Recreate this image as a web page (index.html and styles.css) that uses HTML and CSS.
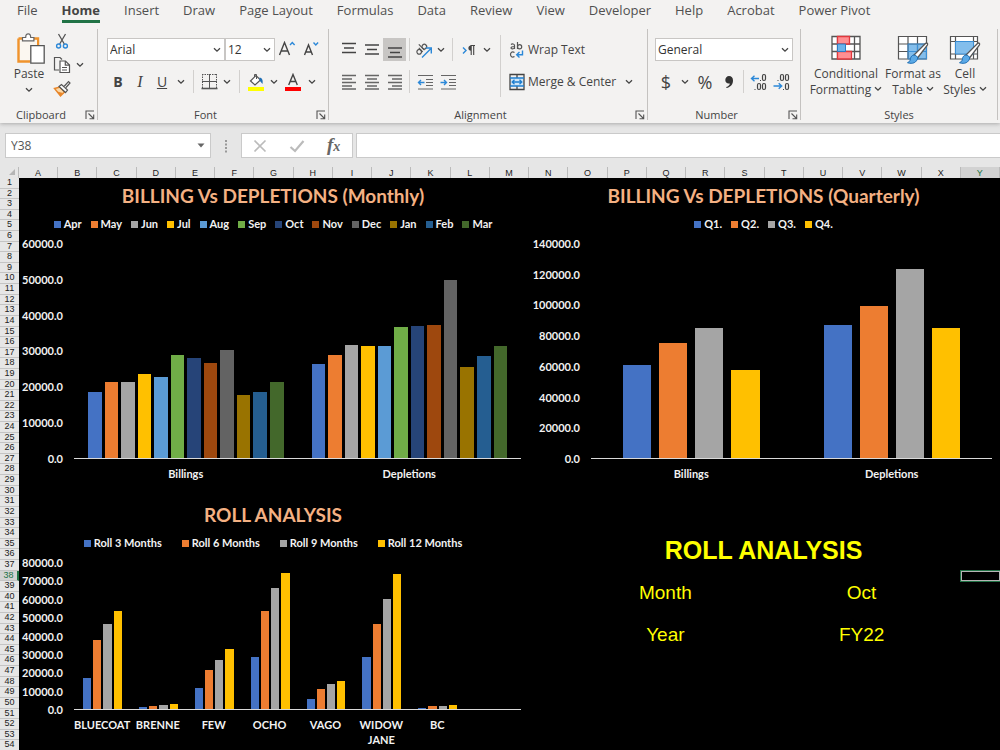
FILE: index.html
```html
<!DOCTYPE html>
<html lang="en">
<head>
<meta charset="utf-8">
<title>Billing Vs Depletions</title>
<link rel="stylesheet" href="styles.css">
</head>
<body>
<svg class="defs" aria-hidden="true">
  <symbol id="chev" viewBox="0 0 8 6"><path d="M1 1.2 4 4.2 7 1.2" fill="none" stroke="#444" stroke-width="1.3"/></symbol>
  <symbol id="launch" viewBox="0 0 10 10"><path d="M1 9V1h8M3.5 3.5l5 5M8.7 4.5v4.2H4.5" fill="none" stroke="#555" stroke-width="1.1"/></symbol>
</svg>

<header class="ribbon">
  <nav class="tabs">
    <a href="#">File</a><a href="#" class="active">Home</a><a href="#">Insert</a><a href="#">Draw</a><a href="#">Page Layout</a><a href="#">Formulas</a><a href="#">Data</a><a href="#">Review</a><a href="#">View</a><a href="#">Developer</a><a href="#">Help</a><a href="#">Acrobat</a><a href="#">Power Pivot</a>
  </nav>

  <div class="groups">
    <section class="group">
      <div class="tools clipboard">
        <button class="big">
          <svg width="32" height="33" viewBox="0 0 32 33" fill="none">
            <path d="M5.500 5.500H25V14M17 28.500H5.500V5.500" stroke="#f0932b" stroke-width="2.400"/>
            <path d="M7 7h17v7h-7v13H7z" fill="#fbf7f0"/>
            <path d="M9.500 7.800V4.500h3.200C12.700 2 13.700.8 15.200.8S17.700 2 17.700 4.500h3.200v3.300z" fill="#fff" stroke="#666" stroke-width="1.200"/>
            <path d="M17.800 12.600h13.400v17.600H17.800z" fill="#fff" stroke="#555" stroke-width="1.300"/>
          </svg>
          <span>Paste</span>
          <svg class="chev line"><use href="#chev"/></svg>
        </button>
        <div class="stack">
          <button class="icon" aria-label="Cut"><svg width="16" height="16" viewBox="0 0 16 16" fill="none"><path d="M4.500 1 10.300 11M11.500 1 5.700 11" stroke="#555" stroke-width="1.300"/><circle cx="4.600" cy="13" r="2" stroke="#2b88d8" stroke-width="1.400"/><circle cx="11.400" cy="13" r="2" stroke="#2b88d8" stroke-width="1.400"/></svg></button>
          <div class="row-mini">
            <button class="icon" aria-label="Copy"><svg width="18" height="18" viewBox="0 0 18 18" fill="none" stroke="#555" stroke-width="1.200"><path d="M6 14H1.500V1.500H7L9 3.500"/><path d="M7 5h5.500L16.500 9v7.500H7z" fill="#fff"/><path d="M12.300 5v4.200h4.200M9 11.500h5M9 14h5"/></svg></button>
            <button class="drop" aria-label="Copy options"><svg class="chev"><use href="#chev"/></svg></button>
          </div>
          <button class="icon" aria-label="Format Painter"><svg width="18" height="18" viewBox="0 0 18 18" fill="none"><path d="M1.500 8.500 7 7l4.500 5-4 4z" fill="#fbd9a8" stroke="#e8862a" stroke-width="1.500"/><path d="M4 11.500l6 1.500-2.500 3z" fill="#e8862a"/><path d="M6 6.500 8.500 4.500l6 5.500-2 2.500z" fill="#fff" stroke="#555" stroke-width="1.200"/><path d="M11 6.500 15.500 1.500l1.500 1.500-4.500 5" fill="#fff" stroke="#555" stroke-width="1.200"/></svg></button>
        </div>
      </div>
      <div class="caption"><span>Clipboard</span><button class="launch" aria-label="Clipboard settings"><svg width="10" height="10"><use href="#launch"/></svg></button></div>
    </section>

    <section class="group">
      <div class="tools rows font">
        <div class="row">
          <div class="combo face"><select aria-label="Font"><option>Arial</option></select><svg class="chev"><use href="#chev"/></svg></div>
          <div class="combo size"><select aria-label="Font size"><option>12</option></select><svg class="chev"><use href="#chev"/></svg></div>
          <button class="w24" aria-label="Increase font size"><svg width="18" height="18" viewBox="0 0 18 18" fill="none"><path d="M1.500 14 6.500 1.500 11.500 14M3.200 10h6.600" stroke="#444" stroke-width="1.400"/><path d="M12 4l2.300-2.500L16.600 4" stroke="#2b88d8" stroke-width="1.400"/></svg></button>
          <button class="w24" aria-label="Decrease font size"><svg width="18" height="18" viewBox="0 0 18 18" fill="none"><path d="M2.500 14 6.500 4 10.500 14M3.900 11h5.200" stroke="#444" stroke-width="1.400"/><path d="M11.500 1.500l2.300 2.500 2.300-2.500" stroke="#2b88d8" stroke-width="1.400"/></svg></button>
        </div>
        <div class="row">
          <button class="w22 glyph"><b>B</b></button>
          <button class="w22 glyph serif"><i>I</i></button>
          <button class="w22 glyph"><u>U</u></button>
          <button class="w16" aria-label="Underline options"><svg class="chev"><use href="#chev"/></svg></button>
          <span class="sep"></span>
          <button class="w20" aria-label="Borders"><svg width="17" height="17" viewBox="0 0 17 17" fill="none" stroke="#555"><path d="M1.500 1v14M15.500 1v14M1 1.500h15" stroke-dasharray="1.500 1"/><path d="M8.500 1v14M1 8.500h15"/><path d="M.5 15.500h16" stroke-width="1.600"/></svg></button>
          <button class="w16" aria-label="Border options"><svg class="chev"><use href="#chev"/></svg></button>
          <span class="sep"></span>
          <button class="w22" aria-label="Fill colour"><svg width="18" height="18" viewBox="0 0 18 18" fill="none"><path d="M3.500 8 9 2.500l4.500 4.500L8 12z" fill="#fff" stroke="#555" stroke-width="1.200"/><path d="M7.500 4V1.500h2V6" stroke="#555"/><path d="M12.500 4.500c3 .5 3.500 3 3 6.500l-3-3.500z" fill="#1f6fb5"/><path d="M1 14h16v4H1z" fill="#ff0"/></svg></button>
          <button class="w14" aria-label="Fill colours"><svg class="chev"><use href="#chev"/></svg></button>
          <button class="w24" aria-label="Font colour"><svg width="18" height="18" viewBox="0 0 18 18" fill="none"><path d="M4.700 12 9 1.500 13.300 12M6.200 8.500h5.600" stroke="#444" stroke-width="1.400"/><path d="M1 14h16v4H1z" fill="#f00"/></svg></button>
          <button class="w14" aria-label="Font colours"><svg class="chev"><use href="#chev"/></svg></button>
        </div>
      </div>
      <div class="caption"><span>Font</span><button class="launch" aria-label="Font settings"><svg width="10" height="10"><use href="#launch"/></svg></button></div>
    </section>

    <section class="group">
      <div class="tools align">
        <div class="rows">
          <div class="row">
            <button class="w23" aria-label="Top align"><svg width="16" height="16" viewBox="0 0 16 16"><path d="M1 1.500h14M3 6h10M1 10.500h14" stroke="#444" stroke-width="1.300"/></svg></button>
            <button class="w23" aria-label="Middle align"><svg width="16" height="16" viewBox="0 0 16 16"><path d="M1 3h14M3 7.500h10M1 12h14" stroke="#444" stroke-width="1.300"/></svg></button>
            <button class="w23 on" aria-label="Bottom align"><svg width="16" height="16" viewBox="0 0 16 16"><path d="M1 6h14M3 10.500h10M1 15h14" stroke="#444" stroke-width="1.300"/></svg></button>
            <span class="sep near"></span>
            <button class="w20" aria-label="Orientation"><svg width="20" height="18" viewBox="0 0 20 18" fill="none"><g transform="rotate(-45 8 8)" stroke="#555" stroke-width="1.200"><circle cx="4" cy="8" r="2.300"/><path d="M6.500 5v5.500"/><path d="M9 2.500v8"/><circle cx="11.300" cy="8" r="2.300"/></g><path d="M8 16.500 16.500 8M11.800 7h5.500v5.500" stroke="#2b88d8" stroke-width="1.400"/></svg></button>
            <button class="w14" aria-label="Orientation options"><svg class="chev"><use href="#chev"/></svg></button>
            <span class="sep"></span>
            <button class="w22" aria-label="Text direction"><svg width="14" height="14" viewBox="0 0 14 14" fill="none"><path d="M1 4.500l3 3-3 3" stroke="#2b88d8" stroke-width="1.400"/><path d="M9 2.500a2.500 2.500 0 0 0 0 5.200z" fill="#444"/><path d="M9.200 2.500V12M11.700 2.500V12M8.500 2.500H13" stroke="#444" stroke-width="1.100"/></svg></button>
            <button class="w14" aria-label="Direction options"><svg class="chev"><use href="#chev"/></svg></button>
          </div>
          <div class="row">
            <button class="w23" aria-label="Align left"><svg width="16" height="16" viewBox="0 0 16 16"><path d="M1 1.500h14M1 5h10M1 8.500h14M1 12h10M1 15h14" stroke="#666" stroke-width="1.300"/></svg></button>
            <button class="w23" aria-label="Centre"><svg width="16" height="16" viewBox="0 0 16 16"><path d="M1 1.500h14M3 5h10M1 8.500h14M3 12h10M1 15h14" stroke="#666" stroke-width="1.300"/></svg></button>
            <button class="w23" aria-label="Align right"><svg width="16" height="16" viewBox="0 0 16 16"><path d="M1 1.500h14M5 5h10M1 8.500h14M5 12h10M1 15h14" stroke="#666" stroke-width="1.300"/></svg></button>
            <span class="sep near"></span>
            <button class="w22" aria-label="Decrease indent"><svg width="16" height="16" viewBox="0 0 16 16" fill="none"><path d="M1 1.500h15M9 5.500h7M9 8.500h7M9 11.500h7M1 15h15" stroke="#666" stroke-width="1.200"/><path d="M7.500 8.500H1.500M4 6 1.500 8.500 4 11" stroke="#2b88d8" stroke-width="1.400"/></svg></button>
            <button class="w23" aria-label="Increase indent"><svg width="16" height="16" viewBox="0 0 16 16" fill="none"><path d="M1 1.500h15M9 5.500h7M9 8.500h7M9 11.500h7M1 15h15" stroke="#666" stroke-width="1.200"/><path d="M.5 8.500h6M4 6l2.500 2.500L4 11" stroke="#2b88d8" stroke-width="1.400"/></svg></button>
          </div>
        </div>
        <span class="tall"></span>
        <div class="rows wide">
          <div class="row"><button class="labelled"><svg width="18" height="18" viewBox="0 0 18 18" fill="none" stroke="#555" stroke-width="1.200"><path d="M3 3.500c1-.8 3.500-.8 3.500 1V8M6.500 5.500C4 5.500 3 6 3 7s2.500 1.300 3.500 0M9.500 1v7"/><circle cx="11.600" cy="5.800" r="2.100"/><path d="M6.500 11.500c-2.500-1.500-4 .2-4 2s1.500 3.500 4 2"/><path d="M14.500 9.500v4.200H9M11.500 11l-2.800 2.700 2.800 2.700" stroke="#2b88d8" stroke-width="1.400"/></svg>Wrap Text</button></div>
          <div class="row"><button class="labelled"><svg width="18" height="18" viewBox="0 0 18 18" fill="none"><path d="M2 5h14v8H2z" fill="#cfe6f8"/><path d="M2 1.500h14v15H2zM9 1.500V5M9 13v3.500" stroke="#444" stroke-width="1.300"/><path d="M2 5h14M2 13h14M4 9h10M6.500 6.800 4.200 9l2.300 2.200M11.500 6.800 13.800 9l-2.300 2.200" stroke="#1f7fd0" stroke-width="1.300"/></svg>Merge &amp; Center</button><button class="w14 more" aria-label="Merge options"><svg class="chev"><use href="#chev"/></svg></button></div>
        </div>
      </div>
      <div class="caption"><span>Alignment</span><button class="launch" aria-label="Alignment settings"><svg width="10" height="10"><use href="#launch"/></svg></button></div>
    </section>

    <section class="group">
      <div class="tools rows number">
        <div class="row"><div class="combo format"><select aria-label="Number format"><option>General</option></select><svg class="chev"><use href="#chev"/></svg></div></div>
        <div class="row">
          <button class="w22 glyph large">$</button>
          <button class="w16" aria-label="Currency options"><svg class="chev"><use href="#chev"/></svg></button>
          <button class="w24 glyph large">%</button>
          <button class="w23" aria-label="Comma style"><svg width="10" height="14" viewBox="0 0 10 14"><path d="M5 1c2.500 0 4 1.700 4 4.500 0 4-2.500 6.800-6.500 7.500l-.3-1c2.300-.8 3.500-2 3.600-3.600C3.300 9 1.300 7.500 1.300 5 1.300 2.700 3 1 5 1z" fill="#333"/></svg></button>
          <span class="sep tight"></span>
          <button class="w23" aria-label="Increase decimal"><svg width="17" height="18" viewBox="0 0 17 18" fill="none" stroke="#444" stroke-width="1.200"><path d="M9 5.500H1.500M4.500 2.700 1.500 5.500l3 2.800" stroke="#2b88d8" stroke-width="1.400"/><rect x="12.500" y="1.500" width="3" height="6" rx="1.500"/><rect x="7.500" y="10.500" width="3" height="6" rx="1.500"/><rect x="12.500" y="10.500" width="3" height="6" rx="1.500"/><path d="M10 7.500h1M4.500 16.500h1"/></svg></button>
          <button class="w23" aria-label="Decrease decimal"><svg width="17" height="18" viewBox="0 0 17 18" fill="none" stroke="#444" stroke-width="1.200"><rect x="7.500" y="1.500" width="3" height="6" rx="1.500"/><rect x="12.500" y="1.500" width="3" height="6" rx="1.500"/><path d="M4.500 7.500h1M10 16.500h1"/><path d="M.5 13h8M5.700 10.200l3 2.800-3 2.800" stroke="#2b88d8" stroke-width="1.400"/><rect x="12.500" y="10.500" width="3" height="6" rx="1.500"/></svg></button>
        </div>
      </div>
      <div class="caption"><span>Number</span><button class="launch" aria-label="Number settings"><svg width="10" height="10"><use href="#launch"/></svg></button></div>
    </section>

    <section class="group">
      <div class="tools styles">
        <button class="big w72">
          <svg width="32" height="33" viewBox="0 0 32 33" fill="none"><path d="M2 3.500h28v22.500H2z" fill="#fff"/><path d="M2 3.500h28v22.500H2zM2 11h28M2 18.500h28M7.500 3.500v22.500M24.500 3.500v22.500" stroke="#555" stroke-width="1.300"/><path d="M7.500 3.500h12V11h-12zM7.500 18.500h14v7.500h-14z" fill="#ff8f92" stroke="#e0393e" stroke-width="1.300"/><path d="M7.500 11h8v7.500h-8z" fill="#6db3ea" stroke="#2b7cc4"/></svg>
          <span>Conditional</span><span>Formatting <svg class="chev"><use href="#chev"/></svg></span>
        </button>
        <button class="big w54">
          <svg width="32" height="33" viewBox="0 0 32 33" fill="none"><path d="M1.500 3.500h28v22.500h-28z" fill="#fff"/><path d="M11 11h18.500v15H11z" fill="#83beec"/><path d="M1.500 3.500h28v22.500h-28zM1.500 11h28M1.500 18.500h28M11 3.500v22.500M20.500 3.500v22.500" stroke="#555" stroke-width="1.200"/><path d="M11 11h18.500v15H11zM11 18.500h18.500M20.500 11v15" stroke="#3a8fd6"/><path d="M17 22 28.500 10.500c1.300-1.200 2.800.2 1.800 1.700L20.500 25z" fill="#fff" stroke="#555" stroke-width="1.300"/><path d="M17 22c2 .3 3.300 1.300 3.700 3-1 4.500-5 6.500-10.200 4.700 2.500-1 2.700-2.300 3-4.200.3-2 1.700-3.300 3.500-3.500z" fill="#5aa9e6" stroke="#1f6fb5"/></svg>
          <span>Format as</span><span>Table <svg class="chev"><use href="#chev"/></svg></span>
        </button>
        <button class="big w42">
          <svg width="32" height="33" viewBox="0 0 32 33" fill="none"><path d="M1.500 3.500h27v22.500h-27z" fill="#fff"/><path d="M1.500 3.500h27v22.500h-27zM1.500 8.500h27M1.500 21h27M6.500 3.500v22.500M24.500 3.500v22.500" stroke="#555" stroke-width="1.200"/><path d="M6.500 8.500h18V21h-18z" fill="#83beec" stroke="#3a8fd6"/><path d="M17 22 28.500 10.500c1.300-1.200 2.800.2 1.800 1.700L20.500 25z" fill="#fff" stroke="#555" stroke-width="1.300"/><path d="M17 22c2 .3 3.300 1.300 3.700 3-1 4.500-5 6.500-10.200 4.700 2.500-1 2.700-2.300 3-4.200.3-2 1.700-3.300 3.500-3.500z" fill="#5aa9e6" stroke="#1f6fb5"/></svg>
          <span>Cell</span><span>Styles <svg class="chev"><use href="#chev"/></svg></span>
        </button>
      </div>
      <div class="caption"><span>Styles</span></div>
    </section>
  </div>
</header>

<div class="formula-bar">
  <div class="name-box"><input type="text" value="Y38" aria-label="Name box"><button aria-label="Show names"><svg width="8" height="5" viewBox="0 0 8 5"><path d="M.5.500h7L4 4.500z" fill="#666"/></svg></button></div>
  <span class="dots"><svg width="4" height="14" viewBox="0 0 4 14" fill="#999"><path d="M1 1h2v2H1zM1 4.500h2v2H1zM1 8h2v2H1zM1 11.500h2v2H1z"/></svg></span>
  <div class="entry">
    <button aria-label="Cancel"><svg width="14" height="14" viewBox="0 0 14 14"><path d="M1.500 1.500l11 11M12.500 1.500l-11 11" stroke="#bbb" stroke-width="1.700"/></svg></button>
    <button aria-label="Enter"><svg width="16" height="14" viewBox="0 0 16 14"><path d="M1.500 8l4.500 4L14.500 2" fill="none" stroke="#bbb" stroke-width="2.200"/></svg></button>
    <button class="fx"><i>f<small>x</small></i></button>
  </div>
  <input class="formula" type="text" aria-label="Formula">
</div>

<main class="workbook">
  <div class="corner"><svg width="6" height="6" viewBox="0 0 6 6"><path d="M6 0v6H0z" fill="#b5b5b5"/></svg></div>
  <div class="col-heads" id="cols"></div>
  <div class="row-heads" id="rows"></div>
  <div class="sheet">
    <section class="chart" id="monthly"></section>
    <section class="chart" id="quarterly"></section>
    <section class="chart" id="roll"></section>
    <section class="summary">
      <h2>ROLL ANALYSIS</h2>
      <table>
        <tr><th scope="row">Month</th><td>Oct</td></tr>
        <tr><th scope="row">Year</th><td>FY22</td></tr>
      </table>
    </section>
    <div class="selection"><div class="cell"></div></div>
  </div>
</main>
<script src="charts.js"></script>
</body>
</html>
```
FILE: styles.css
```css
* { box-sizing: border-box; }
body {
  margin: 0;
  min-height: 100vh;
  overflow: hidden;
  background: #e6e6e6;
  color: #444;
  font: 12px/16px "Open Sans", "Noto Sans", sans-serif;
}
button {
  display: flex;
  align-items: center;
  justify-content: center;
  margin: 0;
  padding: 0;
  border: 0;
  background: none;
  color: inherit;
  font: inherit;
}
svg { flex: none; }
.defs { position: absolute; width: 0; height: 0; }
.chev { width: 8px; height: 6px; }

/* ribbon */
.ribbon {
  position: relative;
  padding-bottom: 3px;
  background: #f3f2f1;
  box-shadow: 0 1px 4px #aaa;
}
.tabs { display: flex; gap: 24px; padding-left: 17px; }
.tabs a {
  border-bottom: 3px solid transparent;
  color: #505050;
  font-size: 13px;
  line-height: 20px;
  text-decoration: none;
  white-space: nowrap;
}
.tabs .active { border-color: #217346; color: #444; font-weight: 700; }
.groups {
  display: grid;
  grid-template-columns: 98fr 231fr 319fr 153fr 197fr 2fr;
  margin-top: 6px;
}
.group {
  display: flex;
  flex-direction: column;
  justify-content: space-between;
  min-width: 0;
  height: 91px;
  border-right: 1px solid #c4c2c0;
}
.tools { display: flex; white-space: nowrap; }
.rows { display: flex; flex-direction: column; gap: 9px; padding-top: 9px; }
.row { display: flex; align-items: center; height: 23px; }
.row button { height: 23px; flex: none; }
.w14 { width: 14px; }
.w16 { width: 16px; }
.w20 { width: 20px; }
.w22 { width: 22px; }
.w23 { width: 23px; }
.w24 { width: 24px; }
.on { background: #c8c6c4; }
.sep { width: 1px; height: 23px; margin: 0 5px 0 4px; background: #d2d0ce; }
.near { margin: 0 4px 0 3px; }
.tight { margin: 0 3px; }
.glyph { font-size: 14px; }
.glyph.large { font-size: 18px; }
.serif { font-family: "Liberation Serif", serif; font-size: 16px; }
.caption { display: flex; font-size: 11px; line-height: 10px; }
.caption span { flex: 1; text-align: center; }
.launch { width: 15px; }

.clipboard { padding-left: 13px; }
.stack { display: flex; flex-direction: column; padding-left: 7px; }
.stack .icon { width: 20px; height: 24px; }
.row-mini { display: flex; align-items: center; }
.drop { width: 16px; }
.big { flex-direction: column; justify-content: flex-start; padding-top: 4px; }
.big span .chev { vertical-align: 2px; }
.line { margin: 5px 0; }
.font { padding-left: 9px; }
.w72 { width: 72px; }
.w54 { width: 54px; }
.w42 { width: 42px; }
.align .rows { padding-left: 8px; }
.tall { width: 1px; height: 62px; margin: 6px 0 0 6px; background: #d2d0ce; }
.align .wide { padding-left: 7px; }
.align .wide .row { justify-content: flex-start; }
.labelled { gap: 2px; }
.more { margin-left: 6px; }
.number { padding: 9px 7px 0; }
.styles { gap: 4px; padding-left: 9px; }

.combo {
  display: flex;
  align-items: center;
  height: 23px;
  padding-right: 3px;
  border: 1px solid #c8c6c4;
  background: #fff;
}
.combo select {
  flex: 1;
  min-width: 0;
  padding: 0 0 0 2px;
  border: 0;
  appearance: none;
  background: none;
  color: #333;
  font: inherit;
}
.face { width: 118px; }
.size { width: 50px; }
.format { flex: 1; }

/* formula bar */
.formula-bar { display: flex; height: 44px; padding: 10px 0 9px 5px; }
.formula-bar input { min-width: 0; border: 0; background: #fff; color: #555; font: inherit; }
.name-box { display: flex; width: 206px; border: 1px solid #cacaca; background: #fff; }
.name-box input { flex: 1; padding: 0 5px; }
.name-box button { width: 19px; }
.dots { display: flex; align-items: center; justify-content: center; width: 30px; }
.entry { display: flex; width: 112px; border: 1px solid #cacaca; background: #fff; }
.entry button { flex: 1; }
.entry .fx { color: #666; font: bold 19px/20px "Liberation Serif", serif; }
.fx small { font-size: 14px; }
.formula-bar .formula { flex: 1; margin-left: 3px; border: 1px solid #cacaca; border-right: 0; }

/* workbook */
.workbook {
  display: grid;
  grid-template-columns: 19px 1fr;
  grid-template-rows: 11px auto;
  color: #222;
  font: 9px/10px "Liberation Sans", Arial, sans-serif;
}
.corner { display: flex; align-items: flex-end; justify-content: flex-end; padding: 0 3px 3px 0; border-right: 1px solid #bbb; }
.col-heads { display: grid; grid-template-columns: repeat(25, 1fr); }
.col-heads span { border-right: 1px solid #bbb; text-align: center; line-height: 12px; }
.col-heads .here { background: #d2d2d2; color: #217346; border-bottom: 1px solid #217346; }
.row-heads { display: grid; grid-template-rows: repeat(54, 1fr); }
.row-heads span { border-bottom: 1px solid #c4c4c4; text-align: center; line-height: 9px; }
.row-heads .here { background: #d2d2d2; color: #217346; border-right: 2px solid #217346; }
.sheet {
  position: relative;
  display: grid;
  grid-template-columns: 508fr 473fr;
  background: #000;
}

/* charts */
.chart {
  padding: 4px 0 16px;
  color: #f2f2f2;
  font: bold 11px/15px Lato, "Open Sans", sans-serif;
}
.chart h2 { margin: 0; color: #f4b183; font-size: 19px; line-height: 28px; text-align: center; }
.legend { display: flex; justify-content: center; gap: 9px; margin: 4px 0 10px; padding: 0; list-style: none; line-height: 20px; }
.legend li { display: flex; align-items: center; gap: 3px; }
.legend i { width: 7px; height: 7px; }
.plot { display: grid; grid-template-columns: 44px 1fr; column-gap: 11px; padding-right: 6px; }
.axis { display: flex; flex-direction: column; justify-content: space-between; margin: -6px 0; line-height: 12px; text-align: right; }
.bars { display: flex; height: 215px; border-bottom: 1px solid #d9d9d9; }
.cluster { display: flex; flex: 1; align-items: flex-end; gap: 3px; padding: 0 14px; }
.bar { flex: 1; }
.cats { display: flex; grid-column: 2; margin-top: 7px; }
.cats span { flex: 1 1 0; min-width: 0; text-align: center; }
#quarterly .plot { grid-template-columns: 53px 1fr; padding-right: 8px; }
#quarterly .cluster { gap: 8px; padding: 0 32px; }
#roll { padding-bottom: 4px; }
#roll .legend { gap: 20px; }
#roll .bars { height: 147px; }
#roll .cluster { gap: 2px; padding: 0 8px 0 9px; }

.summary { padding-top: 38px; color: #ff0; font-size: 19px; }
.summary h2 { margin: 0 0 7px; font-size: 25px; line-height: 30px; text-align: center; }
.summary table { width: 83%; margin: 0 auto; border-collapse: collapse; table-layout: fixed; text-align: center; }
.summary th, .summary td { height: 42px; padding: 0; font-weight: 400; }

.selection {
  position: absolute;
  inset: 0;
  display: grid;
  grid-template-columns: repeat(25, 1fr);
  grid-template-rows: repeat(54, 1fr);
  pointer-events: none;
}
.selection .cell { grid-area: 38 / 25; border: 1px solid #b5b5b5; outline: 1px solid #217346; }
```
FILE: charts.js
```js
const palette = ["#4472c4", "#ed7d31", "#a5a5a5", "#ffc000", "#5b9bd5", "#70ad47",
  "#264478", "#9e480e", "#636363", "#997300", "#255e91", "#43682b"];

const charts = {
  monthly: {
    title: "BILLING Vs DEPLETIONS (Monthly)", max: 60000, step: 10000,
    series: ["Apr", "May", "Jun", "Jul", "Aug", "Sep", "Oct", "Nov", "Dec", "Jan", "Feb", "Mar"],
    data: {
      Billings: [18500, 21400, 21400, 23600, 22800, 28800, 28100, 26700, 30400, 17800, 18500, 21400],
      Depletions: [26300, 28800, 31800, 31300, 31500, 36800, 37000, 37400, 49900, 25600, 28500, 31300]
    }
  },
  quarterly: {
    title: "BILLING Vs DEPLETIONS (Quarterly)", max: 140000, step: 20000,
    series: ["Q1.", "Q2.", "Q3.", "Q4."],
    data: {
      Billings: [61100, 75200, 85200, 57600],
      Depletions: [86800, 99600, 123800, 85200]
    }
  },
  roll: {
    title: "ROLL ANALYSIS", max: 80000, step: 10000,
    series: ["Roll 3 Months", "Roll 6 Months", "Roll 9 Months", "Roll 12 Months"],
    data: {
      BLUECOAT: [16800, 37800, 46700, 53500],
      BRENNE: [1100, 1900, 2400, 2800],
      FEW: [11300, 21200, 27000, 32900],
      OCHO: [28500, 53500, 66500, 74700],
      VAGO: [5500, 11000, 13500, 15400],
      "WIDOW JANE": [28500, 46700, 60300, 74200],
      BC: [600, 1500, 1900, 2400],
      "": []
    }
  }
};

for (const [id, c] of Object.entries(charts)) {
  const ticks = [];
  for (let v = c.max; v >= 0; v -= c.step) ticks.push(`<span>${v}.0</span>`);
  const legend = c.series.map((s, i) => `<li><i style="background:${palette[i]}"></i>${s}</li>`);
  const clusters = Object.values(c.data).map(vals => `<div class="cluster">${
    vals.map((v, i) => `<div class="bar" style="height:${v / c.max * 100}%;background:${palette[i]}"></div>`).join("")
  }</div>`);
  const cats = Object.keys(c.data).map(k => `<span>${k}</span>`);
  document.getElementById(id).innerHTML = `<h2>${c.title}</h2>
    <ul class="legend">${legend.join("")}</ul>
    <div class="plot"><div class="axis">${ticks.join("")}</div>
    <div class="bars">${clusters.join("")}</div>
    <div class="cats">${cats.join("")}</div></div>`;
}

document.getElementById("cols").innerHTML = [..."ABCDEFGHIJKLMNOPQRSTUVWXY"]
  .map(l => `<span${l === "Y" ? ' class="here"' : ""}>${l}</span>`).join("");
document.getElementById("rows").innerHTML = Array.from({ length: 54 }, (_, i) =>
  `<span${i === 37 ? ' class="here"' : ""}>${i + 1}</span>`).join("");
```
